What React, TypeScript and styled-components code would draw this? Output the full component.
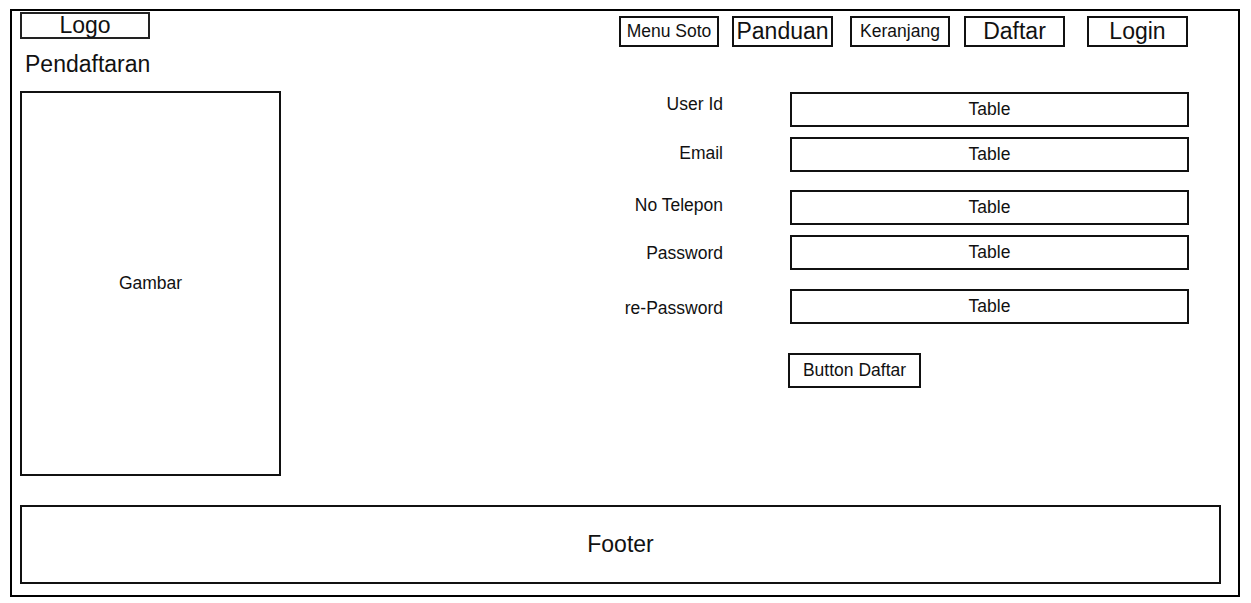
import React from "react";
import styled, { createGlobalStyle } from "styled-components";

const GlobalStyle = createGlobalStyle`
  html, body {
    margin: 0;
    padding: 0;
    background: #ffffff;
  }
  body {
    font-family: "Liberation Sans", Arial, Helvetica, sans-serif;
    color: #111111;
  }
  *, *::before, *::after {
    box-sizing: border-box;
  }
`;

const Frame = styled.div`
  margin: 9px 0 0 10px;
  width: 1230px;
  height: 588px;
  border: 2px solid #000;
  padding: 0 0 0 8px;
  display: flex;
  flex-direction: column;
`;

const Top = styled.div`
  display: flex;
`;

const LeftCol = styled.div`
  width: 261px;
  display: flex;
  flex-direction: column;
`;

const LogoBox = styled.div`
  margin-top: 1px;
  width: 130px;
  height: 27px;
  border: 2px solid #222;
  display: flex;
  align-items: center;
  justify-content: center;
  font-size: 23px;
  line-height: 1;
`;

const Title = styled.h1`
  margin: 12px 0 0 5px;
  font-size: 23px;
  font-weight: 400;
  line-height: 27px;
`;

const ImagePanel = styled.div`
  margin-top: 13px;
  height: 385px;
  border: 2px solid #111;
  display: flex;
  align-items: center;
  justify-content: center;
  font-size: 17.5px;
`;

const RightCol = styled.div`
  flex: 1;
  display: flex;
  flex-direction: column;
  align-items: flex-end;
  padding-right: 49px;
`;

const Nav = styled.nav`
  margin-top: 5px;
  margin-right: 1px;
  display: flex;
`;

const NavItem = styled.div<{ $gap: number; $w: number; $big?: boolean }>`
  margin-left: ${(p) => p.$gap}px;
  width: ${(p) => p.$w}px;
  height: 31px;
  border: 2px solid #111;
  display: flex;
  align-items: center;
  justify-content: center;
  font-size: ${(p) => (p.$big ? "23px" : "17.5px")};
  line-height: 1;
`;

const Form = styled.div`
  margin-top: 45px;
  display: flex;
  flex-direction: column;
`;

const Row = styled.div<{ $mt: number }>`
  margin-top: ${(p) => p.$mt}px;
  display: flex;
  align-items: flex-start;
  gap: 67px;
`;

const Label = styled.div<{ $dy: number }>`
  width: 140px;
  margin-top: ${(p) => p.$dy}px;
  text-align: right;
  font-size: 17.5px;
  line-height: 20px;
`;

const Field = styled.div`
  width: 399px;
  height: 35px;
  border: 2px solid #111;
  display: flex;
  align-items: center;
  justify-content: center;
  font-size: 17.5px;
`;

const SubmitButton = styled.button`
  margin-left: -2px;
  width: 133px;
  height: 35px;
  padding: 0;
  border: 2px solid #111;
  background: #fff;
  color: #111;
  font-family: inherit;
  font-size: 17.5px;
`;

const Footer = styled.footer`
  margin-top: 29px;
  width: 1201px;
  height: 79px;
  border: 2px solid #111;
  display: flex;
  align-items: center;
  justify-content: center;
  font-size: 23px;
`;

const navItems = [
  { label: "Menu Soto", gap: 0, w: 100, big: false },
  { label: "Panduan", gap: 13, w: 101, big: true },
  { label: "Keranjang", gap: 17, w: 100, big: false },
  { label: "Daftar", gap: 14, w: 101, big: true },
  { label: "Login", gap: 22, w: 101, big: true },
];

const fields = [
  { label: "User Id", mt: 0, dy: 2 },
  { label: "Email", mt: 10, dy: 6 },
  { label: "No Telepon", mt: 18, dy: 5 },
  { label: "Password", mt: 10, dy: 8 },
  { label: "re-Password", mt: 19, dy: 9 },
];

export default function App() {
  return (
    <>
      <GlobalStyle />
      <Frame>
        <Top>
          <LeftCol>
            <LogoBox>Logo</LogoBox>
            <Title>Pendaftaran</Title>
            <ImagePanel>Gambar</ImagePanel>
          </LeftCol>
          <RightCol>
            <Nav>
              {navItems.map((n) => (
                <NavItem key={n.label} $gap={n.gap} $w={n.w} $big={n.big}>
                  {n.label}
                </NavItem>
              ))}
            </Nav>
            <Form>
              {fields.map((f) => (
                <Row key={f.label} $mt={f.mt}>
                  <Label $dy={f.dy}>{f.label}</Label>
                  <Field>Table</Field>
                </Row>
              ))}
              <Row $mt={29}>
                <Label $dy={0} />
                <SubmitButton type="button">Button Daftar</SubmitButton>
              </Row>
            </Form>
          </RightCol>
        </Top>
        <Footer>Footer</Footer>
      </Frame>
    </>
  );
}
